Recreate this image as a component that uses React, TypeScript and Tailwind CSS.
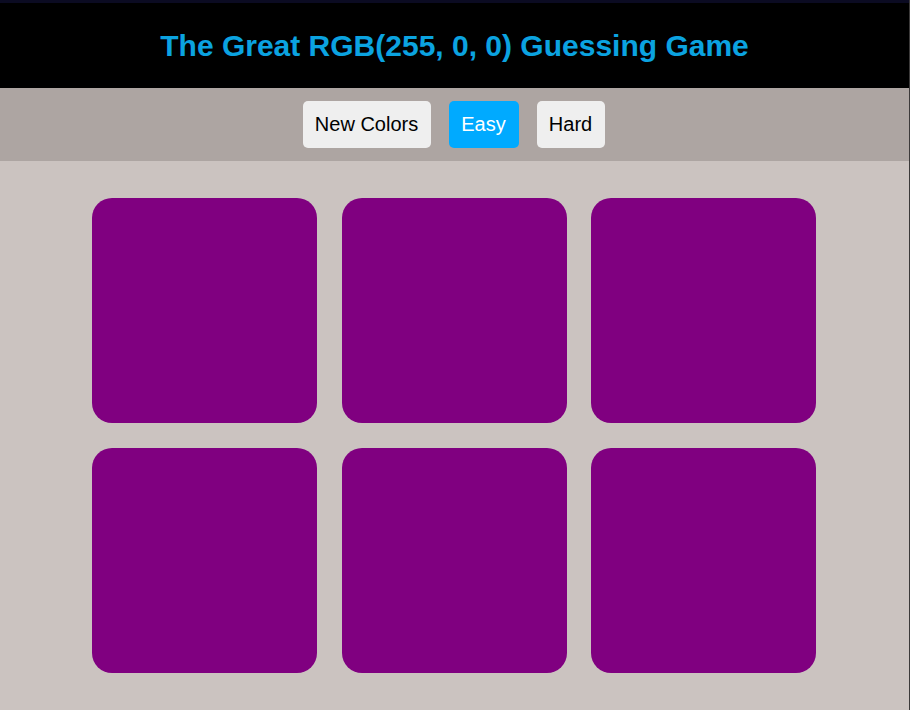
export default function App() {
  const squares = Array.from({ length: 6 });

  return (
    <div className="w-[910px] h-[710px] overflow-hidden bg-[#cbc3c0] border-r border-[#3c3a3a] font-['Liberation_Sans',Arial,sans-serif]">
      {/* Header */}
      <div className="h-[3px] bg-[#0b0b22]" />
      <header className="h-[85px] bg-black flex items-center justify-center">
        <h1 className="text-[30px] font-bold text-[#0ba3e0] leading-none">The Great RGB(255, 0, 0) Guessing Game</h1>
      </header>

      {/* Controls */}
      <nav className="h-[73px] bg-[#ada5a2] flex items-center justify-center gap-[18px] pr-[2px]">
        <button className="h-[47px] w-[128px] pb-[2px] rounded-[5px] bg-[#efefef] text-[20px] text-black">New Colors</button>
        <button className="h-[47px] w-[70px] pb-[2px] rounded-[5px] bg-[#00aaff] text-[20px] text-white">Easy</button>
        <button className="h-[47px] w-[68px] pb-[2px] rounded-[5px] bg-[#efefef] text-[20px] text-black">Hard</button>
      </nav>

      {/* Squares */}
      <main className="pt-[37px] flex justify-center">
        <div className="grid grid-cols-[225px_225px_225px] gap-x-[24.5px] gap-y-[25px] ml-[-0.5px]">
          {squares.map((_, i) => (
            <div key={i} className="w-[225px] h-[225px] rounded-[20px] bg-[#800080]" />
          ))}
        </div>
      </main>
    </div>
  );
}
